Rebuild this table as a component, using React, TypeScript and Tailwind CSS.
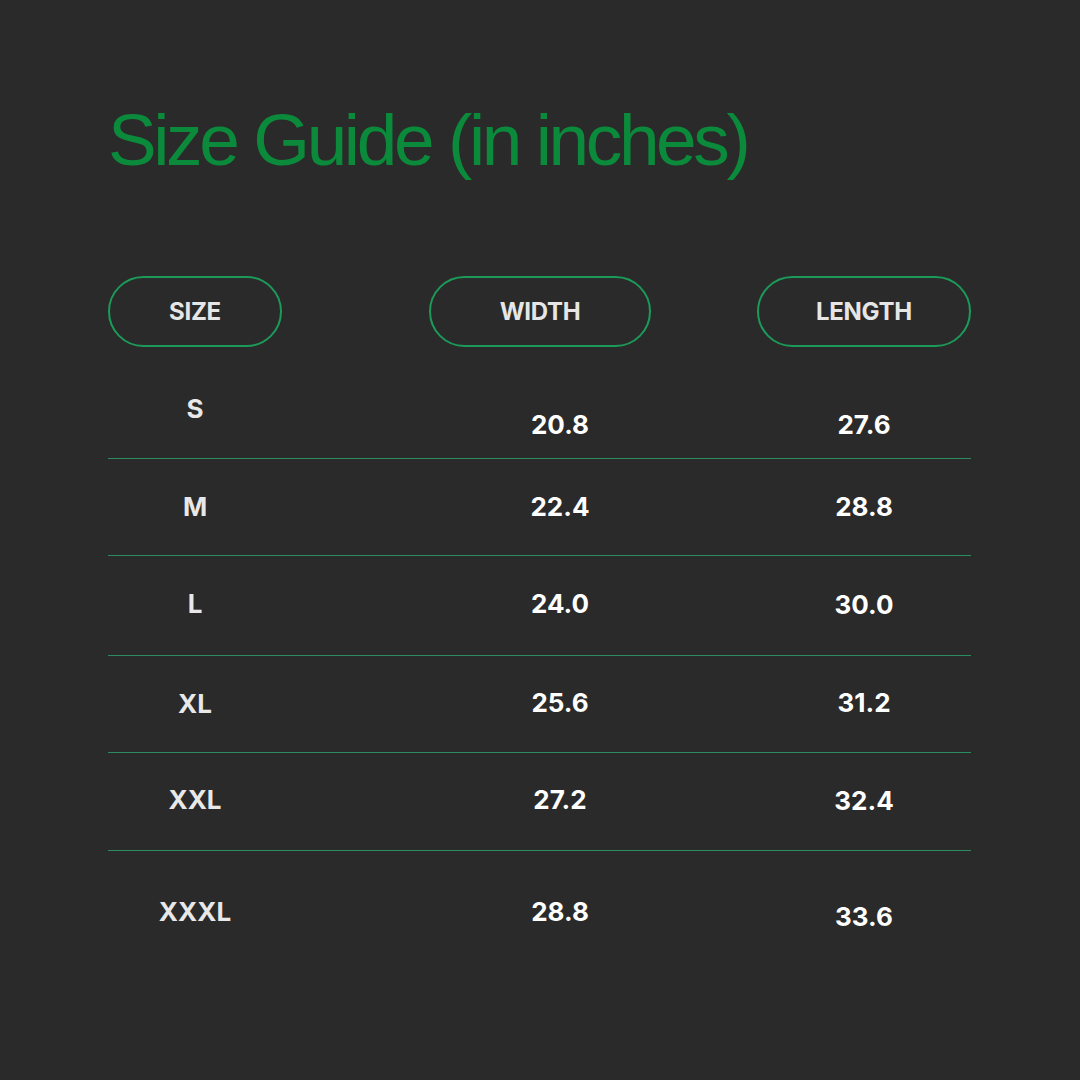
import React from 'react';

type Row = {
  size: string;
  width: string;
  length: string;
  h: string;
  pads: [string, string, string];
};

const rows: Row[] = [
  { size: 'S', width: '20.8', length: '27.6', h: 'h-[112px]', pads: ['pt-[47px]', 'pt-[63px]', 'pt-[63px]'] },
  { size: 'M', width: '22.4', length: '28.8', h: 'h-[97px]', pads: ['pt-[33px]', 'pt-[33px]', 'pt-[33px]'] },
  { size: 'L', width: '24.0', length: '30.0', h: 'h-[100px]', pads: ['pt-[33px]', 'pt-[33px]', 'pt-[34px]'] },
  { size: 'XL', width: '25.6', length: '31.2', h: 'h-[97px]', pads: ['pt-[33px]', 'pt-[32px]', 'pt-[32px]'] },
  { size: 'XXL', width: '27.2', length: '32.4', h: 'h-[98px]', pads: ['pt-[32px]', 'pt-[32px]', 'pt-[33px]'] },
  { size: 'XXXL', width: '28.8', length: '33.6', h: 'h-[120px]', pads: ['pt-[46px]', 'pt-[46px]', 'pt-[51px]'] },
];

const Pill: React.FC<{ label: string; w: string }> = ({ label, w }) => (
  <div
    className={`${w} h-[71px] rounded-full border-2 border-[#1c9a5a] flex items-center justify-center text-[24px] font-bold text-[#e6e6e6] tracking-[-0.3px]`}
  >
    {label}
  </div>
);

export default function App() {
  return (
    <div
      className="w-[1080px] h-[1080px] bg-[#2a2a2a] overflow-hidden"
      style={{ fontFamily: 'Inter, "Noto Sans", sans-serif' }}
    >
      <div className="pl-[108px] pt-[96px]">
        <h1
          className="text-[73px] leading-[88px] font-normal text-[#0b8a3b] tracking-[-3.4px]"
          style={{ fontFamily: '"Liberation Sans", Arial, sans-serif' }}
        >
          Size Guide (in inches)
        </h1>

        <div className="mt-[92px] w-[863px]">
          {/* header pills */}
          <div className="grid grid-cols-[321px_328px_214px]">
            <Pill label="SIZE" w="w-[174px]" />
            <Pill label="WIDTH" w="w-[222px]" />
            <Pill label="LENGTH" w="w-[214px]" />
          </div>

          {rows.map((r, i) => (
            <div
              key={r.size}
              className={`grid grid-cols-[321px_328px_214px] ${r.h} ${
                i < rows.length - 1 ? 'border-b border-[#2b8c5f]' : ''
              }`}
            >
              <div className={r.pads[0]}>
                <div className="w-[174px] text-center text-[26px] leading-[30px] font-bold text-[#e8e8e8]">
                  {r.size}
                </div>
              </div>
              <div className={r.pads[1]}>
                <div className="w-[262px] text-center text-[26px] leading-[30px] font-bold text-white">
                  {r.width}
                </div>
              </div>
              <div className={r.pads[2]}>
                <div className="w-[214px] text-center text-[26px] leading-[30px] font-bold text-white">
                  {r.length}
                </div>
              </div>
            </div>
          ))}
        </div>
      </div>
    </div>
  );
}
